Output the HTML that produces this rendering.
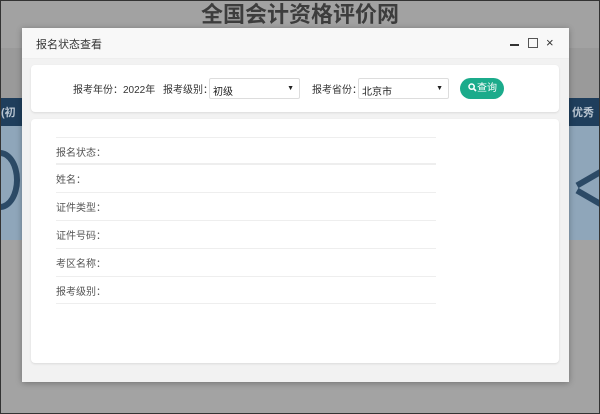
<!DOCTYPE html>
<html><head><meta charset="utf-8"><style>
*{margin:0;padding:0;box-sizing:border-box}
body{width:600px;height:414px;overflow:hidden;position:relative;font-family:"Liberation Sans","Noto Sans CJK SC",sans-serif;background:#a3a3a3}
.abs{position:absolute}
</style></head><body>
<div class="abs" style="left:0;top:0;width:600px;height:48px;background:#a2a2a2"></div>
<div class="abs" style="left:0;top:1px;width:600px;text-align:center;font-size:22px;font-weight:bold;color:#3d3d3d;line-height:28px">全国会计资格评价网</div>
<div class="abs" style="left:0;top:48px;width:600px;height:50px;background:#9a9a9a"></div>
<div class="abs" style="left:0;top:98px;width:600px;height:28px;background:#1f3e5c"></div>
<div class="abs" style="left:1px;top:104px;font-size:11px;color:#b8c4d0;font-weight:bold">(初</div>
<div class="abs" style="left:572px;top:104px;font-size:11px;color:#b8c4d0;font-weight:bold">优秀</div>
<div class="abs" style="left:0;top:126px;width:600px;height:114px;background:#8fa6ba"></div>
<div class="abs" style="left:-20px;top:150px;width:40px;height:60px;border:6px solid #2c4a66;border-radius:50%"></div>
<div class="abs" style="left:575px;top:175px;width:30px;height:6px;background:#2c4a66;transform:rotate(-30deg)"></div>
<div class="abs" style="left:575px;top:195px;width:30px;height:6px;background:#2c4a66;transform:rotate(30deg)"></div>
<div class="abs" style="left:22px;top:28px;width:547px;height:354px;background:#f2f2f2;box-shadow:0 1px 6px rgba(0,0,0,.3)">
  <div class="abs" style="left:0;top:0;width:547px;height:31px;background:#f8f8f8;border-bottom:1px solid #eee"></div>
  <div class="abs" style="left:14px;top:8px;font-size:11px;color:#333">报名状态查看</div>
  <div class="abs" style="left:488px;top:16px;width:9px;height:1.5px;background:#333"></div>
  <div class="abs" style="left:506px;top:10px;width:10px;height:10px;border:1px solid #555"></div>
  <div class="abs" style="left:524px;top:7px;font-size:13px;color:#333">×</div>
  <div class="abs" style="left:9px;top:37px;width:528px;height:47px;background:#fff;border-radius:4px;box-shadow:0 1px 2px rgba(0,0,0,.1)"></div>
  <div class="abs" style="left:51px;top:53px;font-size:10px;color:#333">报考年份：2022年</div>
  <div class="abs" style="left:141px;top:53px;font-size:10px;color:#333">报考级别：</div>
  <div class="abs" style="left:187px;top:50px;width:91px;height:21px;border:1px solid #ddd;border-radius:2px;font-size:10px;padding:4px 3px;color:#222">初级<span style="position:absolute;right:5px;top:6px;font-size:7px">▼</span></div>
  <div class="abs" style="left:290px;top:53px;font-size:10px;color:#333">报考省份：</div>
  <div class="abs" style="left:336px;top:50px;width:91px;height:21px;border:1px solid #ddd;border-radius:2px;font-size:10px;padding:4px 3px;color:#222">北京市<span style="position:absolute;right:5px;top:6px;font-size:7px">▼</span></div>
  <div class="abs" style="left:438px;top:50px;width:44px;height:21px;background:#1bab8b;border-radius:11px;color:#fff;font-size:10px;line-height:21px;padding-left:8px"><svg width="9" height="9" viewBox="0 0 9 9" style="vertical-align:-1px"><circle cx="3.6" cy="3.6" r="2.6" fill="none" stroke="#fff" stroke-width="1.5"/><path d="M5.5 5.5L8 8" stroke="#fff" stroke-width="1.6"/></svg>查询</div>
  <div class="abs" style="left:9px;top:91px;width:528px;height:244px;background:#fff;border-radius:4px;box-shadow:0 1px 2px rgba(0,0,0,.1)"></div>
</div>
<div class="abs" style="left:56px;top:137px;width:380px;height:166px;font-size:10px;color:#555">
  <div style="height:28px;border-top:1px solid #eee;border-bottom:2px solid #eee;padding-top:6px">报名状态：</div>
  <div style="height:28px;border-bottom:1px solid #eee;padding-top:6px">姓名：</div>
  <div style="height:28px;border-bottom:1px solid #eee;padding-top:6px">证件类型：</div>
  <div style="height:28px;border-bottom:1px solid #eee;padding-top:6px">证件号码：</div>
  <div style="height:28px;border-bottom:1px solid #eee;padding-top:6px">考区名称：</div>
  <div style="height:27px;border-bottom:1px solid #eee;padding-top:6px">报考级别：</div>
</div>
<div class="abs" style="left:0;top:0;width:600px;height:414px;border:1px solid #333"></div>
</body></html>
